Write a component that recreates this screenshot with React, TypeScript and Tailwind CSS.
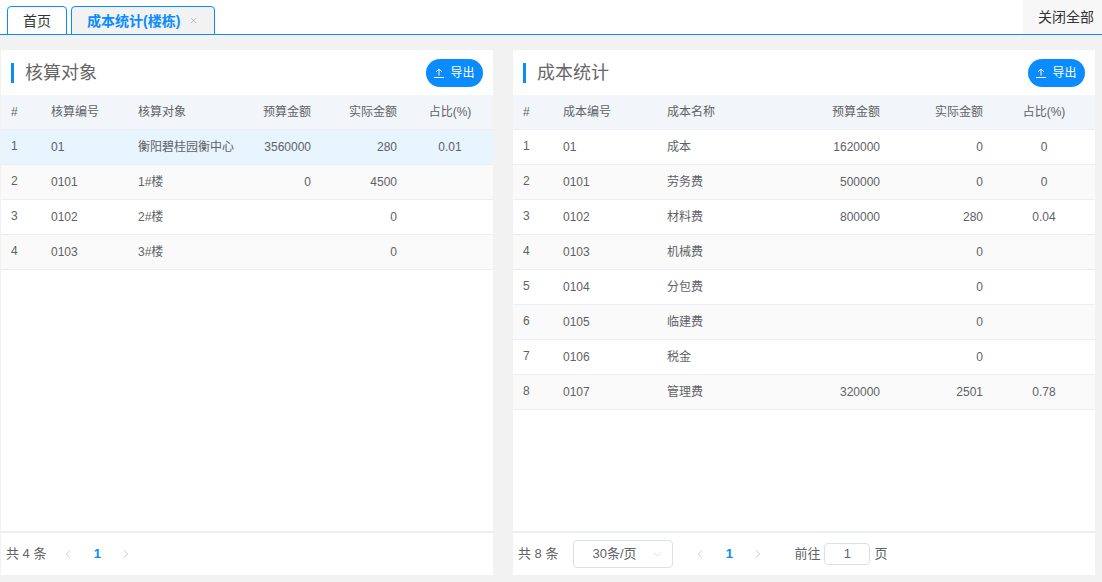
import React from 'react';
import { ChevronDown, ChevronLeft, ChevronRight, X } from 'lucide-react';

type Align = 'left' | 'right' | 'center';
type Col = { label: string; align: Align };

const leftCols: Col[] = [
  { label: '#', align: 'left' },
  { label: '核算编号', align: 'left' },
  { label: '核算对象', align: 'left' },
  { label: '预算金额', align: 'right' },
  { label: '实际金额', align: 'right' },
  { label: '占比(%)', align: 'center' },
];

const leftRows = [
  ['1', '01', '衡阳碧桂园衡中心', '3560000', '280', '0.01'],
  ['2', '0101', '1#楼', '0', '4500', ''],
  ['3', '0102', '2#楼', '', '0', ''],
  ['4', '0103', '3#楼', '', '0', ''],
];

const rightCols: Col[] = [
  { label: '#', align: 'left' },
  { label: '成本编号', align: 'left' },
  { label: '成本名称', align: 'left' },
  { label: '预算金额', align: 'right' },
  { label: '实际金额', align: 'right' },
  { label: '占比(%)', align: 'center' },
];

const rightRows = [
  ['1', '01', '成本', '1620000', '0', '0'],
  ['2', '0101', '劳务费', '500000', '0', '0'],
  ['3', '0102', '材料费', '800000', '280', '0.04'],
  ['4', '0103', '机械费', '', '0', ''],
  ['5', '0104', '分包费', '', '0', ''],
  ['6', '0105', '临建费', '', '0', ''],
  ['7', '0106', '税金', '', '0', ''],
  ['8', '0107', '管理费', '320000', '2501', '0.78'],
];

const alignClass = { left: 'text-left', right: 'text-right', center: 'text-center' };

function Cell({ align, first, children }: { align: Align; first: boolean; children: React.ReactNode }) {
  return (
    <div className={`${alignClass[align]} px-[10px] whitespace-nowrap overflow-hidden ${first ? '-mt-[2px]' : ''}`}>
      {children}
    </div>
  );
}

function Table({ cols, rows, grid, selected }: { cols: Col[]; rows: string[][]; grid: string; selected?: number }) {
  return (
    <div className="flex-1 text-xs text-[#606266]">
      <div className={`grid ${grid} items-center h-[35px] bg-[#f2f6fa] border-b border-[#ebeef5]`}>
        {cols.map((c, i) => (
          <Cell key={c.label} align={c.align} first={false}>
            {c.label}
          </Cell>
        ))}
      </div>
      {rows.map((row, r) => (
        <div
          key={row[0]}
          className={`grid ${grid} items-center h-[35px] border-b border-[#ebeef5] ${
            r === selected ? 'bg-[#e8f4fe]' : r % 2 === 1 ? 'bg-[#fafafa]' : 'bg-white'
          }`}
        >
          {row.map((v, i) => (
            <Cell key={i} align={cols[i].align} first={i === 0}>
              {v}
            </Cell>
          ))}
        </div>
      ))}
    </div>
  );
}

function Panel({ title, children, footer, className }: { title: string; children: React.ReactNode; footer: React.ReactNode; className: string }) {
  return (
    <section className={`flex flex-col bg-white ${className}`}>
      <div className="flex items-center justify-between h-[45px] pl-[10px] pr-[10px]">
        <h2 className="border-l-[3px] border-[#0a8cff] pl-[11px] h-5 leading-5 text-lg font-normal text-[#666666]">{title}</h2>
        <button className="flex items-center gap-[6px] h-7 w-[57px] justify-center rounded-full bg-[#0a8cff] text-xs text-white">
          <svg width="10" height="10" viewBox="0 0 10 10" fill="none" stroke="white" strokeWidth="1">
            <path d="M0 9.5h10M5 7.5V1M2 3.8 5 1l3 2.8" />
          </svg>
          导出
        </button>
      </div>
      {children}
      <div className="flex items-center h-[44px] border-t-2 border-[#ebeef5] text-[13px] text-[#606266]">{footer}</div>
    </section>
  );
}

function Pager() {
  return (
    <div className="flex items-center">
      <ChevronLeft size={14} strokeWidth={1.5} className="text-[#c0c4cc]" />
      <span className="w-[44px] text-center text-[13px] font-bold text-[#0a8cff]">1</span>
      <ChevronRight size={14} strokeWidth={1.5} className="text-[#c0c4cc]" />
    </div>
  );
}

export default function App() {
  return (
    <div className="w-[1102px] h-[582px] overflow-hidden bg-[#f2f2f2] font-['Liberation_Sans','Noto_Sans_CJK_SC',sans-serif]">
      <header className="flex items-end justify-between h-[35px] bg-white border-b border-[#0a8cff]">
        <nav className="flex items-end gap-1 pl-[7px] text-sm">
          <div className="flex items-center justify-center w-[60px] h-[29px] -mb-px border border-[#0a8cff] rounded-t bg-white text-[#333333]">首页</div>
          <div className="flex items-center w-[144px] h-[29px] -mb-px pl-[15px] border border-[#0a8cff] rounded-t bg-[#f2f2f2] font-bold text-[#0a8cff]">
            成本统计(楼栋)
            <X size={9} strokeWidth={1.5} className="ml-[9px] text-[#8a9ab0]" />
          </div>
        </nav>
        <button className="w-[79px] h-[34px] pl-[15px] text-left text-sm text-[#333333] bg-[#f7f7f7]">关闭全部</button>
      </header>

      <main className="flex pt-[15px] pl-px gap-5 h-[540px]">
        <Panel
          title="核算对象"
          className="w-[492px]"
          footer={
            <>
              <span className="ml-[5px] mr-[15px]">共 4 条</span>
              <Pager />
            </>
          }
        >
          <Table cols={leftCols} rows={leftRows} grid="grid-cols-[40px_87px_117px_76px_86px_86px]" selected={0} />
        </Panel>
        <Panel
          title="成本统计"
          className="w-[582px]"
          footer={
            <>
              <span className="ml-[5px] mr-[15px]">共 8 条</span>
              <div className="flex items-center justify-between w-[100px] h-7 mr-5 pl-[18px] pr-2 border border-[#dcdfe6] rounded">
                30条/页
                <ChevronDown size={13} strokeWidth={1} className="text-[#c0c4cc]" />
              </div>
              <Pager />
              <span className="ml-[29px]">前往</span>
              <div className="flex items-center justify-center w-[46px] h-[22px] mx-[4px] border border-[#dcdfe6] rounded">1</div>
              <span>页</span>
            </>
          }
        >
          <Table cols={rightCols} rows={rightRows} grid="grid-cols-[40px_104px_131px_102px_103px_102px]" />
        </Panel>
      </main>
    </div>
  );
}
